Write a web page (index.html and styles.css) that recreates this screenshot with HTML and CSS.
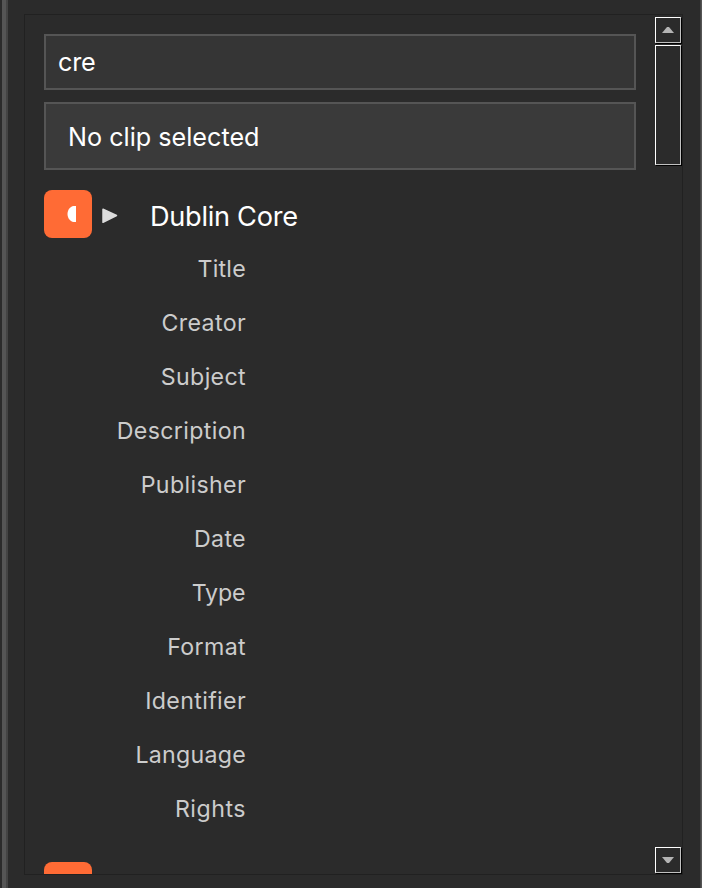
FILE: index.html
```html
<!DOCTYPE html>
<html lang="en">
<head>
<meta charset="utf-8">
<title>Metadata</title>
<link rel="stylesheet" href="styles.css">
</head>
<body>
<main class="window">
  <section class="panel">
    <div class="content">
      <div class="search"><span class="search-text">cre</span></div>
      <div class="clip"><span class="clip-text">No clip selected</span></div>
      <div class="group">
        <span class="toggle"><svg width="48" height="48" viewBox="0 0 48 48"><path d="M32 16v16h-2.500C26 31.500 23.500 28 23.500 24s2.500-7.500 6-8z" fill="#fff"/></svg></span>
        <svg class="arrow" width="18" height="18" viewBox="0 0 18 18"><path d="M2 2.200L15.500 8.500L2 15.300z" fill="#dcdcdc" stroke="#dcdcdc" stroke-width="1.500" stroke-linejoin="round"/></svg>
        <span class="group-name">Dublin Core</span>
      </div>
      <div class="fields">
        <div class="field"><span class="f-title">Title</span></div>
        <div class="field"><span class="f-creator">Creator</span></div>
        <div class="field"><span class="f-subject">Subject</span></div>
        <div class="field"><span class="f-description">Description</span></div>
        <div class="field"><span class="f-publisher">Publisher</span></div>
        <div class="field"><span class="f-date">Date</span></div>
        <div class="field"><span class="f-type">Type</span></div>
        <div class="field"><span class="f-format">Format</span></div>
        <div class="field"><span class="f-identifier">Identifier</span></div>
        <div class="field"><span class="f-language">Language</span></div>
        <div class="field"><span class="f-rights">Rights</span></div>
      </div>
      <span class="toggle next"></span>
    </div>
    <div class="scrollbar">
      <div class="box button"><svg width="12" height="6" viewBox="0 0 12 6"><path d="M0 6L5 0h2l5 6z" fill="#b4b4b4"/></svg></div>
      <div class="box thumb"></div>
      <div class="box button down"><svg width="12" height="6" viewBox="0 0 12 6"><path d="M0 0h12L7 6H5z" fill="#b4b4b4"/></svg></div>
    </div>
  </section>
</main>
</body>
</html>
```

FILE: styles.css
```css
* { box-sizing: border-box; }
body {
  margin: 0;
  background: #2b2b2b;
  color: #fff;
  font-family: Inter, "Liberation Sans", sans-serif;
}
.window {
  height: 888px;
  padding: 14px 19px 13px 24px;
  background:
    linear-gradient(90deg, #2b2b2b 2px, #555 2px 6px, #444 6px 8px, transparent 8px 700px, #444 700px 701px, #555 701px);
}
.panel {
  display: flex;
  height: 861px;
  border: 1px solid #212121;
  overflow: hidden;
}
.content {
  flex: 1;
  padding: 19px 0 0 19px;
}
.search, .clip {
  display: flex;
  align-items: center;
  width: 592px;
  border: 2px solid #555;
  white-space: nowrap;
}
.search {
  height: 56px;
  padding-left: 12px;
  background: #353535;
  font-size: 25.200px;
  letter-spacing: -0.2px;
}
.clip {
  height: 68px;
  margin-top: 12px;
  padding: 2px 0 0 22px;
  background: #3a3a3a;
  font-size: 25.200px;
}
.group {
  display: flex;
  align-items: center;
  height: 48px;
  margin-top: 20px;
}
.toggle {
  display: block;
  width: 48px;
  height: 48px;
  border-radius: 8px;
  background: #ff6b35;
}
.arrow { margin: 3px 0 0 9px; }
.group-name {
  margin: 4px 0 0 31px;
  font-size: 27.200px;
  letter-spacing: -0.3px;
}
.fields { width: 202px; padding-top: 4px; }
.field {
  display: flex;
  justify-content: flex-end;
  align-items: center;
  height: 54px;
  color: #ccc;
  font-size: 23.200px;
  letter-spacing: 0.35px;
}
.f-title { letter-spacing: 0.25px; }
.f-type { letter-spacing: -0.1px; margin-right: 0.5px; }
.f-language { letter-spacing: 0.25px; }
.f-rights { letter-spacing: 0.5px; }
.next { margin-top: 26px; }
.scrollbar {
  display: flex;
  flex-direction: column;
  width: 27px;
  padding: 2px 0 1px;
}
.box {
  width: 26px;
  border: 1px solid;
  border-color: #fff #c0c0c0 #c0c0c0 #fff;
  box-shadow: 1px 1px 0 #000;
}
.button {
  display: flex;
  align-items: center;
  justify-content: center;
  height: 26px;
}
.thumb { height: 120px; margin-top: 2px; }
.down { margin-top: auto; }
```
